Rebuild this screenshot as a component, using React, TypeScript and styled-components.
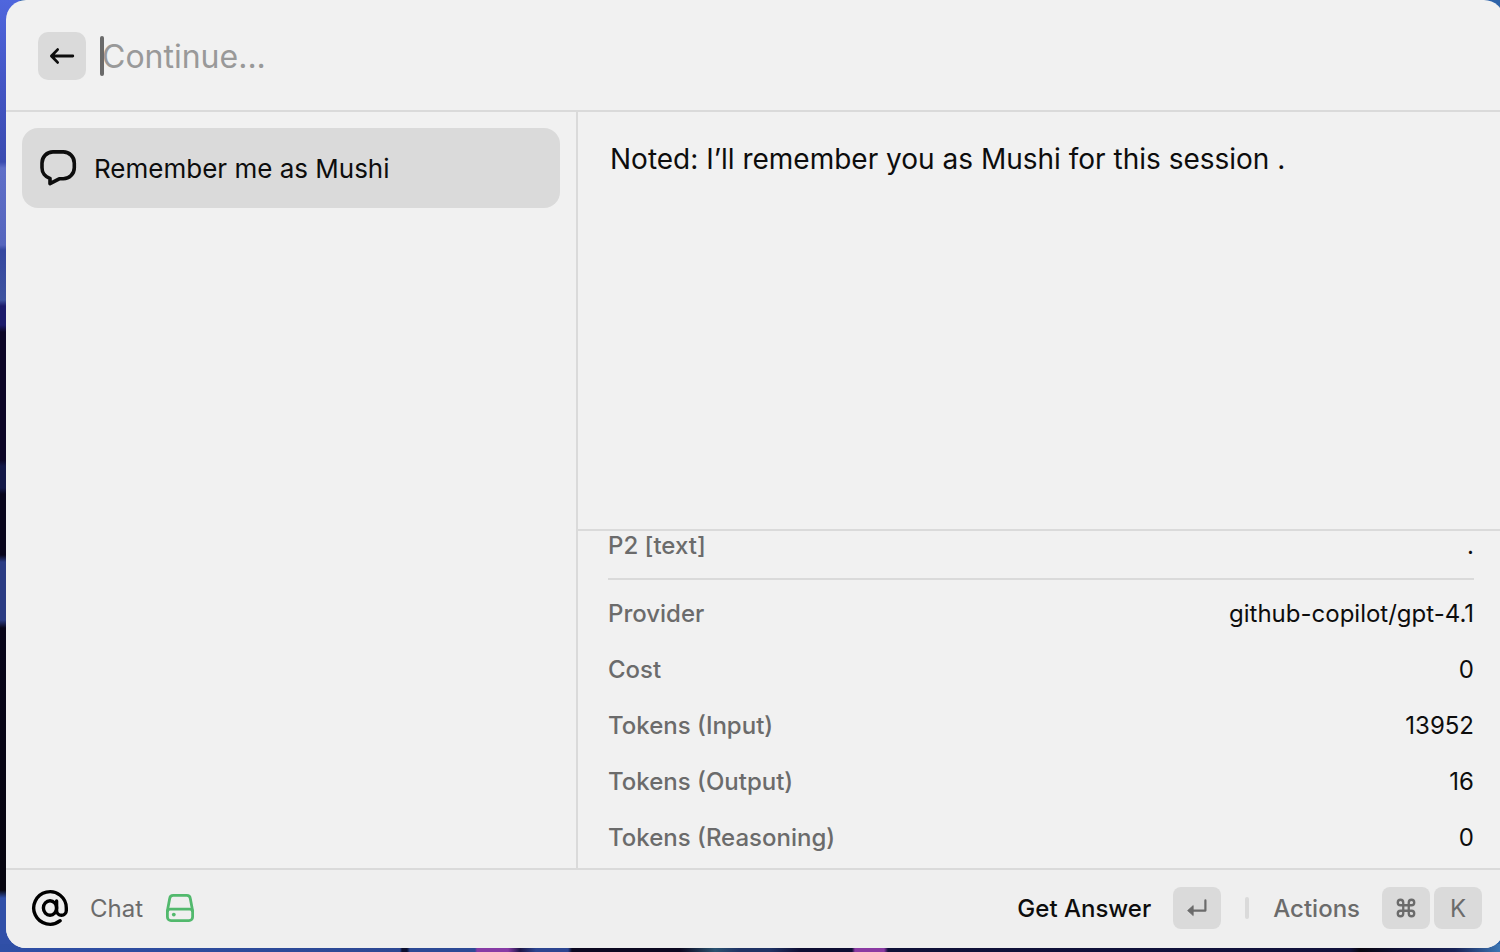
import React from "react";
import styled, { createGlobalStyle, css } from "styled-components";
import { Command } from "lucide-react";

const color = {
  surface: "#f1f1f1",
  footer: "#efefef",
  line: "#dadada",
  fill: "#dadada",
  text: "#0d0d0d",
  muted: "#6b6b6b",
  placeholder: "#999999",
  green: "#52b96d",
};

const GlobalStyle = createGlobalStyle`
  *, *::before, *::after { box-sizing: border-box; }
  body {
    margin: 0;
    overflow: hidden;
    font-family: Inter, "Liberation Sans", sans-serif;
    color: ${color.text};
    -webkit-font-smoothing: antialiased;
  }
  button, input { font: inherit; color: inherit; border: 0; padding: 0; margin: 0; }
`;

const Desktop = styled.div`
  min-height: 100vh;
  display: flex;
  padding: 0 0 4px 6px;
  background:
    linear-gradient(90deg, #2f4fa6 0, #2c4893 400px, #0c1030 402px, #0c1030 407px, #2d4a96 410px, #2d4a96 475px,
      #873ba5 477px, #873ba5 508px, #1d1547 520px, #2c4590 536px, #2c4590 568px, #0b0820 572px, #0b0820 680px,
      #2a5270 715px, #1f3365 740px, #1f3365 770px, #0e0e33 800px, #0e0e33 852px, #8a3aa2 855px, #8a3aa2 884px,
      #0f1038 888px, #10113c 1350px, #08050f 1360px, #0f1038 1400px, #182256 1455px, #3d76b4 100%)
      bottom / 100% 8px no-repeat,
    linear-gradient(180deg, #4f66dd 0, #4355c4 85px, #3a4bb0 162px, #5f6fc8 168px, #5565bd 245px, #3547a0 250px,
      #3e539f 300px, #1c1b6b 306px, #1c1b6b 325px, #0c0626 332px, #0c0626 460px, #131847 466px, #131847 488px,
      #08051c 494px, #08051c 555px, #2b3c83 562px, #2b3c83 620px, #08051a 628px, #06050f 890px, #3150a8 898px,
      #3150a8 100%)
      left / 20px 100% no-repeat,
    #2e63a9;
`;

const Panel = styled.main`
  flex: 1;
  min-width: 0;
  margin-right: -4px;
  display: flex;
  flex-direction: column;
  overflow: hidden;
  border-radius: 20px;
  background: ${color.surface};
`;

const Header = styled.header`
  display: flex;
  align-items: center;
  gap: 14px;
  padding: 32px 32px 30px;
  border-bottom: 2px solid ${color.line};
`;

const BackButton = styled.button`
  width: 48px;
  height: 48px;
  display: grid;
  place-items: center;
  border-radius: 10px;
  background: ${color.fill};
`;

const Search = styled.label`
  position: relative;
  flex: 1;
  display: flex;
`;

const Caret = styled.span`
  position: absolute;
  left: 0;
  top: 4px;
  width: 4px;
  height: 40px;
  border-radius: 2px;
  background: #6a6a6a;
`;

const SearchInput = styled.input`
  flex: 1;
  min-width: 0;
  height: 48px;
  padding-left: 2px;
  background: transparent;
  font-size: 32px;
  outline: none;
  caret-color: transparent;
  &::placeholder { color: ${color.placeholder}; opacity: 1; }
`;

const Body = styled.div`
  flex: 1;
  min-height: 0;
  display: flex;
`;

const Sidebar = styled.nav`
  flex: 0 0 572px;
  padding: 16px;
  border-right: 2px solid ${color.line};
`;

const ChatItem = styled.button`
  width: 100%;
  height: 80px;
  display: flex;
  align-items: center;
  gap: 16px;
  padding: 0 16px;
  border-radius: 16px;
  background: ${color.fill};
  font-size: 26px;
  text-align: left;
`;

const Content = styled.section`
  flex: 1;
  min-width: 0;
  display: flex;
  flex-direction: column;
`;

const Message = styled.article`
  flex: 1;
  padding: 28px 32px;
  font-size: 28px;
  line-height: 38px;
  p { margin: 0; }
`;

const Details = styled.dl`
  margin: 0;
  padding: 0 30px 3px;
  border-top: 2px solid ${color.line};
  font-size: 24px;
`;

const DetailRow = styled.div<{ $clipped?: boolean }>`
  display: flex;
  align-items: center;
  justify-content: space-between;
  height: 56px;
  dt { color: ${color.muted}; font-weight: 500; }
  dd { margin: 0; }
  ${(p) =>
    p.$clipped &&
    css`
      align-items: flex-start;
      height: 49px;
      margin-bottom: 5px;
      line-height: 30px;
      border-bottom: 2px solid ${color.line};
    `}
`;

const Footer = styled.footer`
  display: flex;
  align-items: center;
  justify-content: space-between;
  height: 80px;
  padding: 0 22px 2px 24px;
  border-top: 2px solid ${color.line};
  background: ${color.footer};
  font-size: 24px;
`;

const Group = styled.div`
  display: flex;
  align-items: center;
  gap: 20px;
`;

const Muted = styled.span`
  color: ${color.muted};
`;

const Action = styled.button<{ $muted?: boolean }>`
  display: flex;
  align-items: center;
  gap: 22px;
  background: transparent;
  font-weight: 500;
  color: ${(p) => (p.$muted ? color.muted : color.text)};
`;

const Keys = styled.span`
  display: flex;
  gap: 4px;
`;

const Key = styled.kbd`
  width: 48px;
  height: 42px;
  display: grid;
  place-items: center;
  border-radius: 8px;
  background: ${color.fill};
  color: ${color.muted};
  font-family: inherit;
  font-weight: 400;
`;

const Divider = styled.span`
  width: 4px;
  height: 22px;
  margin: 0 4px;
  border-radius: 2px;
  background: ${color.line};
`;

const ArrowIcon = () => (
  <svg width="28" height="20" viewBox="0 0 28 20" fill="none" stroke={color.text} strokeWidth="2.8" strokeLinecap="round" strokeLinejoin="round" aria-hidden="true">
    <path d="M24.8 10H3.8M9.6 3.6 3.4 10l6.2 6.4" />
  </svg>
);

const BubbleIcon = () => (
  <svg width="40" height="40" viewBox="0 0 40 40" fill="none" stroke={color.text} strokeWidth="3.6" strokeLinejoin="round" aria-hidden="true">
    <path d="M15 3.9h10.3a11 11 0 0 1 11 11v4.9a11 11 0 0 1-11 11h-4.1L12 35.6v-5.2a11 11 0 0 1-8-10.6v-4.9a11 11 0 0 1 11-11Z" />
  </svg>
);

const AtIcon = () => (
  <svg width="40" height="40" viewBox="0 0 40 40" fill="none" stroke="#000" strokeWidth="3.4" strokeLinecap="round" strokeLinejoin="round" aria-hidden="true">
    <ellipse cx="20" cy="20" rx="6.6" ry="7.2" />
    <path d="M26.6 13v9.4a4.8 4.8 0 0 0 9.7 0V20a16.3 16.3 0 1 0-6.1 12.7" />
  </svg>
);

const DriveIcon = () => (
  <svg width="32" height="28" viewBox="-3 0 32 28" fill="none" stroke={color.green} strokeWidth="2.8" strokeLinejoin="round" aria-hidden="true">
    <path d="M7.2 1.4h13.6a3.6 3.6 0 0 1 3.5 3l2.3 12.4v6.2a3.6 3.6 0 0 1-3.6 3.6H5a3.6 3.6 0 0 1-3.6-3.6v-6.2L3.7 4.4a3.6 3.6 0 0 1 3.5-3Z" />
    <path d="M1.4 18a3 3 0 0 1 3-2.8h19.2a3 3 0 0 1 3 2.8" />
    <circle cx="7.8" cy="20.6" r="1.9" fill={color.green} stroke="none" />
  </svg>
);

const ReturnIcon = () => (
  <svg width="20" height="18" viewBox="0 0 20 18" fill="none" aria-hidden="true">
    <path d="M18.4 1.4v10.2H5" stroke={color.muted} strokeWidth="2.2" strokeLinecap="round" strokeLinejoin="round" />
    <path d="M.6 11.6 6.2 6.6v10Z" fill={color.muted} stroke={color.muted} strokeWidth=".8" strokeLinejoin="round" />
  </svg>
);

const details = [
  { label: "Provider", value: "github-copilot/gpt-4.1" },
  { label: "Cost", value: "0" },
  { label: "Tokens (Input)", value: "13952" },
  { label: "Tokens (Output)", value: "16" },
  { label: "Tokens (Reasoning)", value: "0" },
];

export default function App() {
  return (
    <>
      <GlobalStyle />
      <Desktop>
        <Panel>
          <Header>
            <BackButton aria-label="Back">
              <ArrowIcon />
            </BackButton>
            <Search>
              <SearchInput type="text" aria-label="Continue the chat" placeholder="Continue..." />
              <Caret />
            </Search>
          </Header>
          <Body>
            <Sidebar>
              <ChatItem>
                <BubbleIcon />
                Remember me as Mushi
              </ChatItem>
            </Sidebar>
            <Content>
              <Message>
                <p>Noted: I’ll remember you as Mushi for this session .</p>
              </Message>
              <Details>
                <DetailRow $clipped>
                  <dt>P2 [text]</dt>
                  <dd>.</dd>
                </DetailRow>
                {details.map((d) => (
                  <DetailRow key={d.label}>
                    <dt>{d.label}</dt>
                    <dd>{d.value}</dd>
                  </DetailRow>
                ))}
              </Details>
            </Content>
          </Body>
          <Footer>
            <Group>
              <AtIcon />
              <Muted>Chat</Muted>
              <DriveIcon />
            </Group>
            <Group>
              <Action>
                Get Answer
                <Key aria-label="Return">
                  <ReturnIcon />
                </Key>
              </Action>
              <Divider />
              <Action $muted>
                Actions
                <Keys>
                  <Key aria-label="Command">
                    <Command size={22} strokeWidth={2.5} aria-hidden="true" />
                  </Key>
                  <Key>K</Key>
                </Keys>
              </Action>
            </Group>
          </Footer>
        </Panel>
      </Desktop>
    </>
  );
}
